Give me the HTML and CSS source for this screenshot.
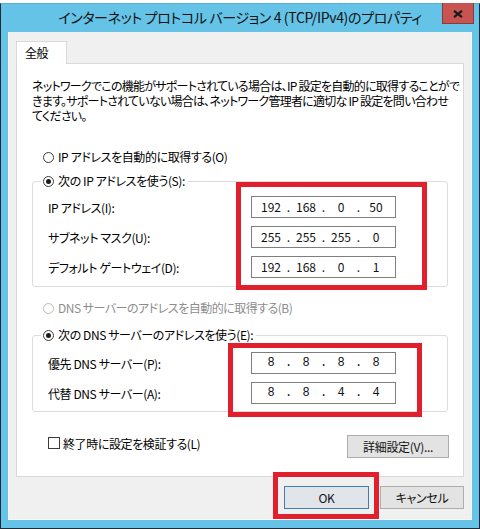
FILE: index.html
```html
<!DOCTYPE html>
<html lang="ja">
<head>
<meta charset="utf-8">
<title>IPv4 プロパティ</title>
<link rel="stylesheet" href="styles.css">
</head>
<body>
<div class="window">
  <div class="titlebar">
    <span></span>
    <div class="title">インターネット プロトコル バージョン 4 (TCP/IPv4)のプロパティ</div>
    <div class="close-cell">
      <div class="close">
        <svg width="10" height="8" viewBox="0 0 10 8"><path d="M1 0.8 L9 7.2 M9 0.8 L1 7.2" stroke="#1b1b1b" stroke-width="2.2" fill="none"/></svg>
      </div>
    </div>
  </div>
  <div class="client">
    <div class="tab">全般</div>
    <div class="panel">
      <div class="desc">
        <span class="desc-line">ネットワークでこの機能がサポートされている場合は、IP 設定を自動的に取得することがで</span>
        <span class="desc-line">きます。サポートされていない場合は、ネットワーク管理者に適切な IP 設定を問い合わせ</span>
        <span class="desc-line">てください。</span>
      </div>

      <div class="radio-row r-auto-ip"><span class="radio"></span><span>IP アドレスを自動的に取得する(O)</span></div>

      <fieldset class="group g-ip">
        <legend class="radio-row"><span class="radio checked"></span><span>次の IP アドレスを使う(S):</span></legend>
        <div class="field-row">
          <span class="label">IP アドレス(I):</span>
          <div class="ipbox"><span>192</span><span>.</span><span>168</span><span>.</span><span>0</span><span>.</span><span>50</span></div>
        </div>
        <div class="field-row">
          <span class="label">サブネット マスク(U):</span>
          <div class="ipbox"><span>255</span><span>.</span><span>255</span><span>.</span><span>255</span><span>.</span><span>0</span></div>
        </div>
        <div class="field-row">
          <span class="label">デフォルト ゲートウェイ(D):</span>
          <div class="ipbox"><span>192</span><span>.</span><span>168</span><span>.</span><span>0</span><span>.</span><span>1</span></div>
        </div>
      </fieldset>

      <div class="radio-row disabled r-auto-dns"><span class="radio"></span><span>DNS サーバーのアドレスを自動的に取得する(B)</span></div>

      <fieldset class="group g-dns">
        <legend class="radio-row"><span class="radio checked"></span><span>次の DNS サーバーのアドレスを使う(E):</span></legend>
        <div class="field-row">
          <span class="label">優先 DNS サーバー(P):</span>
          <div class="ipbox mono"><span>8</span><span>.</span><span>8</span><span>.</span><span>8</span><span>.</span><span>8</span></div>
        </div>
        <div class="field-row">
          <span class="label">代替 DNS サーバー(A):</span>
          <div class="ipbox mono"><span>8</span><span>.</span><span>8</span><span>.</span><span>4</span><span>.</span><span>4</span></div>
        </div>
      </fieldset>

      <div class="check-row">
        <div class="check-label"><span class="checkbox"></span><span>終了時に設定を検証する(L)</span></div>
        <button class="btn btn-adv">詳細設定(V)...</button>
      </div>
    </div>
    <div class="buttons">
      <button class="btn btn-ok">OK</button>
      <button class="btn btn-cancel">キャンセル</button>
    </div>
  </div>
</div>

<div class="highlight hl-ip"></div>
<div class="highlight hl-dns"></div>
<div class="highlight hl-ok"></div>
</body>
</html>
```

FILE: styles.css
```css
* {
  box-sizing: border-box;
}

html, body {
  margin: 0;
  padding: 0;
}

body {
  width: 480px;
  height: 529px;
  overflow: hidden;
  background: #ffffff;
  font-family: "Noto Sans CJK JP", "Noto Sans", sans-serif;
  font-feature-settings: "palt";
  font-size: 12px;
  letter-spacing: -0.4px;
  color: #000;
}

.window {
  margin-top: 3px;
  width: 480px;
  height: 526px;
  background: #64c3e6;
  border: 1px solid #1f2c33;
  border-top-color: #5aaed0;
  display: flex;
  flex-direction: column;
}

.titlebar {
  height: 28px;
  display: grid;
  grid-template-columns: 1fr auto 1fr;
  align-items: center;
}

.title {
  font-size: 14px;
  letter-spacing: -0.35px;
  line-height: 18px;
  color: #111;
  white-space: nowrap;
  margin-top: -2px;
}

.close-cell {
  align-self: start;
  justify-self: end;
  margin-right: 5px;
  margin-top: -1px;
}

.close {
  width: 32px;
  height: 21px;
  background: #c75450;
  border: 1px solid #8a3a37;
  border-top: none;
  display: flex;
  align-items: center;
  justify-content: center;
  padding-top: 1px;
}

.close svg {
  display: block;
}

.client {
  margin: 0 7px 8px 7px;
  flex: 1;
  background: #f0f0f0;
  border: 1px solid #f7f7f7;
  border-top: none;
  padding: 9px 7px 0 7px;
  display: flex;
  flex-direction: column;
}

.tab {
  position: relative;
  z-index: 1;
  width: 51px;
  height: 23px;
  margin-bottom: -1px;
  background: #ffffff;
  border: 1px solid #d9d9d9;
  border-bottom: none;
  padding-left: 8px;
  line-height: 21px;
  font-size: 12px;
}

.panel {
  width: 448px;
  height: 414px;
  background: #ffffff;
  border: 1px solid #d9d9d9;
  padding: 0 15px;
  display: flex;
  flex-direction: column;
}

.desc {
  margin: 14px 0 0 0;
  display: flex;
  flex-direction: column;
  font-size: 12px;
  letter-spacing: -0.75px;
}

.desc-line {
  display: block;
  height: 15px;
  line-height: 15px;
  white-space: nowrap;
}

.radio-row {
  display: flex;
  align-items: center;
  height: 16px;
  line-height: 16px;
  white-space: nowrap;
}

.r-auto-ip {
  margin-top: 26px;
  padding-left: 11px;
}

.r-auto-dns {
  margin-top: 13px;
  padding-left: 11px;
  letter-spacing: -0.5px;
}

.radio {
  width: 11px;
  height: 11px;
  border-radius: 50%;
  border: 1px solid #3c3c3c;
  background: #fff;
  margin-right: 4px;
  display: flex;
  align-items: center;
  justify-content: center;
  flex: none;
}

.radio.checked::after {
  content: "";
  width: 5px;
  height: 5px;
  border-radius: 50%;
  background: #1a1a1a;
}

.disabled {
  color: #8d8d8d;
}

.disabled .radio {
  border-color: #bcbcbc;
}

.group {
  margin: 0;
  border: 1px solid #dcdcdc;
  border-radius: 3px;
  padding: 7px 0 8px 8px;
  min-width: 0;
}

.group legend {
  padding: 0 3px 0 2px;
  margin: 0;
}

.g-ip {
  margin-top: 8px;
}

.g-dns {
  margin-top: 11px;
  padding-top: 9px;
  padding-bottom: 7px;
}

.field-row {
  display: flex;
  align-items: center;
  height: 22px;
  padding-left: 7px;
}

.field-row + .field-row {
  margin-top: 8px;
}

.label {
  width: 203px;
  flex: none;
  white-space: nowrap;
}

.ipbox {
  width: 145px;
  height: 22px;
  border: 1px solid #7f7f7f;
  background: #fff;
  display: grid;
  grid-template-columns: 26px 9px 26px 9px 26px 9px 26px;
  padding-left: 6px;
  align-items: center;
  line-height: 20px;
  font-size: 12px;
  letter-spacing: 0;
  text-align: center;
  color: #111;
}

.ipbox.mono {
  font-family: "Liberation Mono", "DejaVu Sans Mono", monospace;
  font-size: 12px;
}

.check-row {
  margin-top: 23px;
  display: flex;
  align-items: center;
  justify-content: space-between;
  height: 23px;
  padding-left: 16px;
}

.check-label {
  display: flex;
  align-items: center;
  white-space: nowrap;
  margin-top: -7px;
}

.checkbox {
  width: 12px;
  height: 12px;
  border: 1px solid #3c3c3c;
  background: #fff;
  margin-right: 3px;
  flex: none;
}

.btn {
  font-family: "Noto Sans CJK JP", "Noto Sans", sans-serif;
  font-feature-settings: "palt";
  font-size: 12px;
  letter-spacing: -0.3px;
  color: #111;
  height: 23px;
  padding: 0;
  margin: 0;
  background: #e3e3e3;
  border: 1px solid #adadad;
  line-height: 20px;
}

.btn-adv {
  width: 102px;
  margin-right: -1px;
}

.buttons {
  margin-top: 9px;
  display: flex;
  justify-content: flex-end;
  gap: 11px;
}

.btn-ok {
  width: 85px;
  border-color: #3c7fb1;
  background: #e1e4e8;
}

.btn-cancel {
  width: 84px;
}

.highlight {
  position: absolute;
  border: 5px solid #e0202c;
  pointer-events: none;
}

.hl-ip {
  left: 236px;
  top: 182px;
  width: 191px;
  height: 108px;
}

.hl-dns {
  left: 228px;
  top: 343px;
  width: 194px;
  height: 74px;
}

.hl-ok {
  left: 273px;
  top: 472px;
  width: 106px;
  height: 47px;
}
```
